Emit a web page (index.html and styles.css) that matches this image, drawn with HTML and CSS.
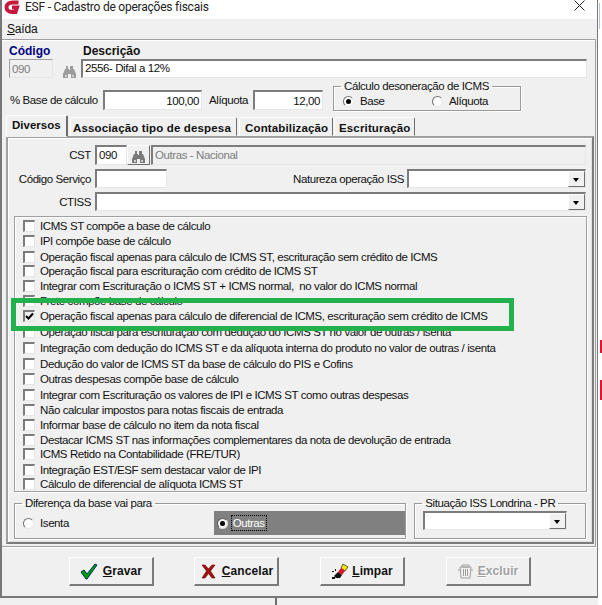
FILE: index.html
```html
<!DOCTYPE html>
<html lang="pt-BR">
<head>
<meta charset="utf-8">
<title>ESF - Cadastro de operações fiscais</title>
<link rel="stylesheet" href="styles.css">
</head>
<body>
<svg width="0" height="0" class="defs">
  <symbol id="bino" viewBox="0 0 13 12">
    <path d="M3 0h2v3h1v1h1V0h3v3h1l2 5v4H8V8H5v4H0V8l2-5h1z" fill="currentColor"/>
    <path d="M2 9h2v2H2zM9 9h2v2H9z" fill="#d0d0d0"/>
  </symbol>
</svg>
<div class="frame">
  <header class="title">
    <svg class="logo" width="18" height="16" viewBox="0 0 18 16">
      <path d="M15.500 2.500H9.500C5.500 2.500 3.500 4.800 3.500 7.300s2 4.700 5.500 4.700h3.500l1.500-4.500H9" fill="none" stroke="#c8173d" stroke-width="4"/>
    </svg>
    <span class="title-text">ESF - Cadastro de operações fiscais</span>
    <svg class="close" width="11" height="11" viewBox="0 0 11 11"><path d="M0.500 0.500l10 10M10.500 0.500l-10 10" stroke="#222" fill="none"/></svg>
  </header>
  <nav class="menu"><span><u>S</u>aída</span></nav>
  <main class="main">
    <div class="labels">
      <b class="lab-code">Código</b>
      <b class="lab-desc">Descrição</b>
    </div>
    <div class="row-id">
      <div class="field code disabled">090</div>
      <svg class="bino-top" width="13" height="12"><use href="#bino"/></svg>
      <div class="field desc">2556- Difal a 12%</div>
    </div>
    <div class="row-base">
      <label class="lab-base">% Base de cálculo</label>
      <div class="field num base">100,00</div>
      <label class="lab-aliq">Alíquota</label>
      <div class="field num aliq">12,00</div>
      <fieldset class="group calc">
        <legend>Cálculo desoneração de ICMS</legend>
        <div class="radios">
          <span class="radio on"></span><span class="radio-label base-label">Base</span>
          <span class="radio"></span><span class="radio-label">Alíquota</span>
        </div>
      </fieldset>
    </div>
    <div class="tabs">
      <div class="tab active">Diversos</div>
      <div class="tab t2">Associação tipo de despesa</div>
      <div class="tab t3">Contabilização</div>
      <div class="tab t4">Escrituração</div>
    </div>
    <section class="panel">
      <div class="line l-cst">
        <label class="lab-left">CST</label>
        <div class="field cst">090</div>
        <button class="find" type="button"><svg width="13" height="12"><use href="#bino"/></svg></button>
        <div class="field cst-name">Outras - Nacional</div>
      </div>
      <div class="line l-serv">
        <label class="lab-left">Código Serviço</label>
        <div class="field serv"></div>
        <label class="lab-nat">Natureza operação ISS</label>
        <div class="field combo nat"><span class="arrow"></span></div>
      </div>
      <div class="line l-ctiss">
        <label class="lab-left">CTISS</label>
        <div class="field combo ctiss"><span class="arrow"></span></div>
      </div>
      <div class="checks">
        <div class="chk h15"><span class="box"></span>ICMS ST compõe a base de cálculo</div>
        <div class="chk h16"><span class="box"></span>IPI compõe base de cálculo</div>
        <div class="chk h14"><span class="box"></span>Operação fiscal apenas para cálculo de ICMS ST, escrituração sem crédito de ICMS</div>
        <div class="chk h15"><span class="box"></span>Operação fiscal para escrituração com crédito de ICMS ST</div>
        <div class="chk h15"><span class="box"></span>Integrar com Escrituração o ICMS ST + ICMS normal,  no valor do ICMS normal</div>
        <div class="chk h15"><span class="box"></span>Frete compõe base de cálculo</div>
        <div class="chk h16"><span class="box on"><svg width="9" height="9" viewBox="0 0 9 9"><path d="M1 4l2.500 2.500L8 1.500" fill="none" stroke="#000" stroke-width="2"/></svg></span>Operação fiscal apenas para cálculo de diferencial de ICMS, escrituração sem crédito de ICMS</div>
        <div class="chk h16"><span class="box"></span>Operação fiscal para escrituração com dedução do ICMS ST no valor de outras / isenta</div>
        <div class="chk h16"><span class="box"></span>Integração com dedução do ICMS ST e da alíquota interna do produto no valor de outras / isenta</div>
        <div class="chk h15"><span class="box"></span>Dedução do valor de ICMS ST da base de cálculo do PIS e Cofins</div>
        <div class="chk h16"><span class="box"></span>Outras despesas compõe base de cálculo</div>
        <div class="chk h15"><span class="box"></span>Integrar com Escrituração os valores de IPI e ICMS ST como outras despesas</div>
        <div class="chk h15"><span class="box"></span>Não calcular impostos para notas fiscais de entrada</div>
        <div class="chk h15"><span class="box"></span>Informar base de cálculo no item da nota fiscal</div>
        <div class="chk h14"><span class="box"></span>Destacar ICMS ST nas informações complementares da nota de devolução de entrada</div>
        <div class="chk h16"><span class="box"></span>ICMS Retido na Contabilidade (FRE/TUR)</div>
        <div class="chk h14"><span class="box"></span>Integração EST/ESF sem destacar valor de IPI</div>
        <div class="chk h15"><span class="box"></span>Cálculo de diferencial de alíquota ICMS ST</div>
      </div>
      <div class="bottom-groups">
        <fieldset class="group dif">
          <legend>Diferença da base vai para</legend>
          <div class="dif-row">
            <div class="dif-left"><span class="radio"></span><span class="radio-label">Isenta</span></div>
            <div class="dif-right"><span class="radio on"></span><span class="focus">Outras</span></div>
          </div>
        </fieldset>
        <fieldset class="group sit">
          <legend>Situação ISS Londrina - PR</legend>
          <div class="field combo sit-combo"><span class="arrow"></span></div>
        </fieldset>
      </div>
    </section>
  </main>
  <footer class="actions">
    <button class="btn" type="button">
      <svg width="18" height="17" viewBox="0 0 18 17"><path d="M1 9l3-2 3 4 8-10 2 1-10 14H6z" fill="#00a000" stroke="#002b6b" stroke-width="1"/></svg>
      <span><u>G</u>ravar</span>
    </button>
    <button class="btn btn-cancel" type="button">
      <svg width="15" height="15" viewBox="0 0 15 15"><path d="M1 1h3l3.500 4L11 1h3l-4.500 6L14 14h-3L7.500 9.500 4 14H1l4.500-7z" fill="#a01010" stroke="#600" stroke-width="0.600"/></svg>
      <span><u>C</u>ancelar</span>
    </button>
    <button class="btn btn-clear" type="button">
      <svg width="18" height="17" viewBox="0 0 18 17"><path d="M12 1l5 3-3 4-4-3z" fill="#f2e600" stroke="#000" stroke-width="0.600"/><path d="M10 5l4 3-3 4-4-3z" fill="#e01030"/><path d="M7 9l4 3-2 3H5l-2-2z" fill="#111"/><path d="M1 8h2v1H1zM4 6h1v2H4zM1 14h3v2H1z" fill="#111"/></svg>
      <span><u>L</u>impar</span>
    </button>
    <button class="btn off" type="button">
      <svg width="15" height="15" viewBox="0 0 15 15"><path d="M2 3h11l-1 11H3zM4 1h7v2H4zM0 6h2M13 6h2M5.500 5v7M7.500 5v7M9.500 5v7" fill="#f0f0f0" stroke="#a0a0a0"/></svg>
      <span><u>E</u>xcluir</span>
    </button>
  </footer>
</div>
<div class="under"><span class="tick"></span></div>
<div class="highlight"></div>
<i class="red r1"></i><i class="red r2"></i>
<div class="mark" aria-hidden="true"></div>
</body>
</html>
```
FILE: styles.css
```css
* { box-sizing: border-box; }
html, body { margin: 0; padding: 0; }
body {
  width: 602px;
  height: 605px;
  overflow: hidden;
  background: #fff;
  position: relative;
  font: 11.5px/14px "Liberation Sans", Arial, sans-serif;
  letter-spacing: -0.41px;
  color: #111;
}
label { white-space: nowrap; }
.defs { position: absolute; }
.frame {
  width: 598px;
  height: 598px;
  background: #f0f0f0;
  border-left: 2px solid #787878;
  border-right: 1px solid #787878;
  border-bottom: 2px solid #787878;
}
.title {
  height: 19px;
  background: #fff;
  display: flex;
  align-items: flex-start;
}
.logo { margin: 0 4px 0 1px; flex: none; }
.title-text {
  font: 12px/14px Roboto, sans-serif;
  letter-spacing: -0.23px;
  color: #222;
}
.close { margin-left: auto; margin-right: 12px; margin-top: 0; }
.menu {
  height: 20px;
  padding: 3px 0 0 5px;
  font-size: 12px;
  letter-spacing: -0.2px;
}
.main {
  border-top: 1px solid #a0a0a0;
  border-right: 1px solid #a0a0a0;
  box-shadow: inset 0 1px 0 #fff;
  margin-right: 1px;
  padding: 3px 0 0 4px;
  height: 508px;
  border-bottom: 1px solid #a0a0a0;
}
.labels { display: flex; height: 16px; padding-top: 1px; }
.labels b { font-weight: 700; font-size: 12px; letter-spacing: 0; }
.lab-code { width: 77px; padding-left: 3px; color: #000080; }
.lab-desc { color: #111; }
.field {
  height: 19px;
  background: #fff;
  border-style: solid;
  border-width: 2px 1px 1px 2px;
  border-color: #7c7c7c #e6e6e6 #e6e6e6 #7c7c7c;
  padding: 0 2px;
  line-height: 14px;
  white-space: nowrap;
}
.row-id { display: flex; align-items: center; padding-left: 3px; }
.code { width: 44px; background: #f0f0f0; border-width: 1px; border-color: #a0a0a0 #e6e6e6 #e6e6e6 #a0a0a0; padding-top: 2px; color: #7c7c7c; }
.bino-top { margin: 6px 5px 0 10px; flex: none; color: #9c9c9c; }
.desc { width: 506px; }
.row-base { display: flex; align-items: flex-end; margin-top: 2px; height: 31px; padding-left: 4px; }
.lab-base { width: 93px; margin-bottom: 4px; }
.num { height: 20px; text-align: right; margin-bottom: 1px; padding: 2px 2px; }
.base { width: 99px; }
.lab-aliq { width: 44px; margin: 0 0 4px 7px; }
.aliq { width: 70px; }
.group {
  margin: 0;
  padding: 0;
  min-width: 0;
  border: 1px solid #9a9a9a;
  box-shadow: 1px 1px 0 #fff, inset 1px 1px 0 #fff;
}
.group legend { padding: 0 3px; margin-left: 7px; line-height: 12px; height: 12px; white-space: nowrap; }
.calc { width: 188px; height: 31px; margin-left: 10px; }
.radios { display: flex; align-items: center; padding: 2px 0 0 9px; }
.radio {
  width: 11px;
  height: 11px;
  border-radius: 50%;
  background: #fff;
  border: 1px solid;
  border-color: #707070 #e8e8e8 #e8e8e8 #707070;
  flex: none;
  display: inline-block;
  position: relative;
}
.radio.on::after {
  content: "";
  position: absolute;
  left: 2px;
  top: 2px;
  width: 5px;
  height: 5px;
  border-radius: 50%;
  background: #000;
}
.radio-label { margin-left: 6px; }
.base-label { width: 72px; }
.tabs { display: flex; align-items: flex-end; margin-top: 4px; height: 21px; }
.tab {
  font-weight: 700;
  font-size: 11.5px;
  letter-spacing: 0.15px;
  height: 19px;
  padding: 3px 0 0 3px;
  background: #f0f0f0;
  border: 1px solid;
  border-color: #fff #6e6e6e transparent #fff;
  border-radius: 2px 2px 0 0;
  white-space: nowrap;
  overflow: hidden;
}
.tab.active { width: 62px; height: 22px; margin-bottom: -1px; padding: 2px 0 0 5px; position: relative; z-index: 1; border-right-width: 2px; letter-spacing: 0; }
.t2 { width: 167px; margin-left: 2px; padding-left: 2px; }
.t3 { width: 94px; margin-left: 2px; padding-left: 5px; }
.t4 { width: 81px; margin-left: 1px; padding-left: 4px; }
.panel {
  width: 588px;
  height: 408px;
  border: 2px solid;
  border-color: #a0a0a0 #7c7c7c #7c7c7c #a0a0a0;
  box-shadow: inset 1px 1px 0 #fff, inset -1px -1px 0 #e0e0e0;
  padding: 7px 6px 0 0;
}
.line { display: flex; align-items: center; }
.lab-left { width: 87px; text-align: right; flex: none; padding-right: 4px; }
.cst { width: 32px; height: 20px; padding-top: 1px; }
.find {
  width: 23px;
  height: 20px;
  padding: 3px 0 0 4px;
  background: #f0f0f0;
  border: 1px solid;
  border-color: #fff #6e6e6e #6e6e6e #fff;
  flex: none;
  color: #7a7a7a;
}
.find svg { display: block; }
.cst-name { margin-left: 1px; width: 435px; height: 20px; background: #f0f0f0; color: #7c7c7c; padding-top: 1px; }
.l-serv { margin-top: 4px; height: 19px; }
.serv { width: 72px; }
.lab-nat { margin-left: 126px; width: 110px; flex: none; }
.combo { position: relative; padding: 0; }
.nat { width: 179px; margin-left: 4px; }
.l-ctiss { margin-top: 4px; }
.ctiss { width: 491px; }
.arrow {
  position: absolute;
  right: 0;
  top: 0;
  width: 17px;
  height: 16px;
  background: #f0f0f0;
  border: 1px solid;
  border-color: #fff #6e6e6e #6e6e6e #fff;
}
.arrow::after {
  content: "";
  position: absolute;
  left: 4px;
  top: 6px;
  border: 3.500px solid transparent;
  border-top: 4px solid #000;
  border-bottom: 0;
}
.checks {
  margin: 5px 0 0 6px;
  width: 573px;
  height: 276px;
  border: 1px solid #a0a0a0;
  box-shadow: 1px 1px 0 #fff, inset 1px 1px 0 #fff;
  padding: 2px 0 0 8px;
}
.chk { display: flex; align-items: flex-start; white-space: pre; }
.h14 { height: 14px; }
.h15 { height: 15px; }
.h16 { height: 16px; }
.box {
  width: 12px;
  height: 12px;
  margin: 1px 5px 0 0;
  background: #fff;
  border: 1px solid;
  border-width: 2px 1px 1px 2px;
  border-color: #7c7c7c #e6e6e6 #e6e6e6 #7c7c7c;
  flex: none;
  position: relative;
}
.box.on { background: #f0f0f0; }
.box svg { position: absolute; left: 0; top: 0; }
.bottom-groups { display: flex; gap: 8px; margin: 5px 0 0 6px; }
.dif { width: 393px; height: 42px; }
.sit { width: 172px; height: 42px; }
.dif-row { display: flex; height: 27px; align-items: flex-start; }
.dif-left { display: flex; align-items: center; width: 199px; padding: 7px 0 0 8px; }
.dif-right {
  width: 192px;
  height: 24px;
  background: #808080;
  color: #fff;
  display: flex;
  align-items: center;
  padding-left: 3px;
  margin-top: 2px;
}
.dif-right .radio { background: #f4f4f4; border-color: #555 #ddd #ddd #555; }
.focus { outline: 1px dotted #000; margin-left: 4px; padding: 0 1px; }
.sit-combo { width: 144px; margin: 2px 0 0 8px; }
.actions {
  display: grid;
  grid-template-columns: 125px 126px 126px 85px;
  padding: 9px 0 0 67px;
  border-top: 1px solid #fff;
}
.btn {
  width: 85px;
  height: 29px;
  background: #f0f0f0;
  border: 1px solid;
  border-width: 1px 2px 2px 1px;
  border-color: #fff #7a7a7a #7a7a7a #fff;
  display: flex;
  align-items: center;
  justify-content: center;
  gap: 5px;
  padding: 0;
  font: 700 12px/14px "Liberation Sans", Arial, sans-serif;
  letter-spacing: 0.1px;
  color: #111;
}
.btn-cancel { padding-left: 2px; gap: 6px; }
.btn-clear { gap: 3px; }
.btn.off { color: #a0a0a0; text-shadow: 1px 1px 0 #fff; }
.under { height: 7px; width: 598px; background: #f0f0f0; }
.tick { display: block; width: 2px; height: 7px; margin-left: 275px; background: #6e6e6e; }
.highlight {
  position: absolute;
  left: 11px;
  top: 298px;
  width: 503px;
  height: 33px;
  border: 5px solid #22b14c;
}
.red { position: absolute; left: 600px; width: 2px; background: #e8102e; }
.r1 { top: 340px; height: 13px; }
.r2 { top: 380px; height: 20px; }
.mark { position: absolute; left: 599px; top: 3px; width: 3px; height: 26px; border-left: 1px solid #3a6fc0; opacity: 0.4; }
```
